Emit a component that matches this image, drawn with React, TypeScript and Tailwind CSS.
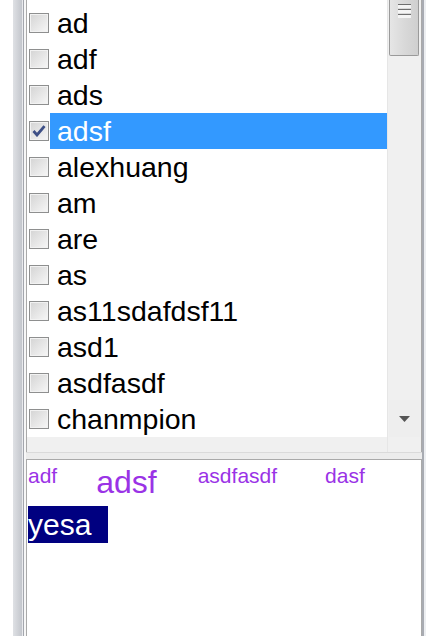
import React from "react";

const items = [
  "ad",
  "adf",
  "ads",
  "adsf",
  "alexhuang",
  "am",
  "are",
  "as",
  "as11sdafdsf11",
  "asd1",
  "asdfasdf",
  "chanmpion",
];

export default function App() {
  return (
    <div className="flex h-[636px] w-[426px] overflow-hidden bg-white font-['Liberation_Sans',Arial,sans-serif]">
      {/* left frame */}
      <div className="w-[13px] bg-white" />
      <div className="w-[9px] bg-gradient-to-r from-[#dfe1e5] to-[#c3c6cc]" />
      <div className="w-[1px] bg-[#e9eaed]" />
      <div className="w-[1px] bg-[#a3a6ad]" />
      <div className="w-[2px] bg-[#f7f7f7]" />

      <div className="flex w-[396px] flex-col">
        {/* checked list box */}
        <div className="flex h-[452px] border-l border-r border-[#a9a9a9]">
          <div className="flex w-[360px] flex-col">
            <div className="flex-1 bg-white pt-[5px]">
              {items.map((name) => (
                <Row key={name} label={name} checked={name === "adsf"} />
              ))}
            </div>
            <div className="h-[15px] bg-[#f0f0f0]" />
          </div>
          <ScrollBar />
        </div>
        <div className="h-[1px] bg-[#dadada]" />
        <div className="h-[6px] bg-[#ececec]" />

        {/* tag panel */}
        <div className="flex-1 border-l border-r border-t border-[#a9a9a9] bg-white pl-[1px] pt-[4px]">
          <div className="flex h-[42px] items-start text-[#9a33e6]">
            <span className="text-[21px] leading-[24px]">adf</span>
            <span className="ml-[39px] text-[32px] leading-[37px]">adsf</span>
            <span className="ml-[41px] text-[21px] leading-[24px]">asdfasdf</span>
            <span className="ml-[48px] text-[21px] leading-[24px]">dasf</span>
          </div>
          <div className="h-[37px] w-[80px] bg-[#000080] text-[30px] leading-[37px] text-white">yesa</div>
        </div>
      </div>

      {/* right frame */}
      <div className="w-[2px] bg-[#a8abb2]" />
      <div className="w-[2px] bg-[#eceef1]" />
    </div>
  );
}

function Row({ label, checked }: { label: string; checked: boolean }) {
  return (
    <div className="flex h-[36px] items-center">
      <div className="ml-[2px] flex h-[20px] w-[20px] items-center justify-center border border-[#8e8f8f] bg-gradient-to-br from-[#d4d4d4] to-[#f7f7f7] shadow-[inset_0_0_0_1px_#f2f2f2]">
        {checked && (
          <svg width="14" height="12" viewBox="0 0 14 12">
            <path d="M1.5 6 L5 10 L12.5 1.2" fill="none" stroke="#3d4f86" strokeWidth="2.8" />
          </svg>
        )}
      </div>
      <div
        className={`ml-[1px] flex h-[36px] flex-1 items-center pl-[7px] text-[28.5px] leading-[36px] ${
          checked ? "bg-[#3399ff] text-white" : "text-black"
        }`}
      >
        {label}
      </div>
    </div>
  );
}

function ScrollBar() {
  return (
    <div className="flex w-[34px] flex-col border-l border-[#e6e6e6] bg-[#f0f0f0] pl-[1px] pr-[1px]">
      <div className="flex h-[56px] w-[30px] justify-center rounded-b-[2px] border border-t-0 border-[#9a9a9a] bg-gradient-to-r from-[#e6e6e6] via-[#d9d9d9] to-[#cfcfcf] pt-[4px]">
        <div className="flex h-[15px] w-[13px] flex-col gap-[1px]">
          <div className="h-[4px] border-t border-[#6f6f6f] bg-[#f4f4f4]" />
          <div className="h-[4px] border-t border-[#6f6f6f] bg-[#f4f4f4]" />
          <div className="h-[4px] border-t border-[#6f6f6f] bg-[#f4f4f4]" />
        </div>
      </div>
      <div className="flex-1" />
      <div className="flex h-[37px] items-center justify-center bg-[#eeeeee]">
        <svg width="11" height="6" viewBox="0 0 11 6">
          <path d="M0 0 L11 0 L5.5 6 Z" fill="#555555" />
        </svg>
      </div>
      <div className="h-[15px]" />
    </div>
  );
}
